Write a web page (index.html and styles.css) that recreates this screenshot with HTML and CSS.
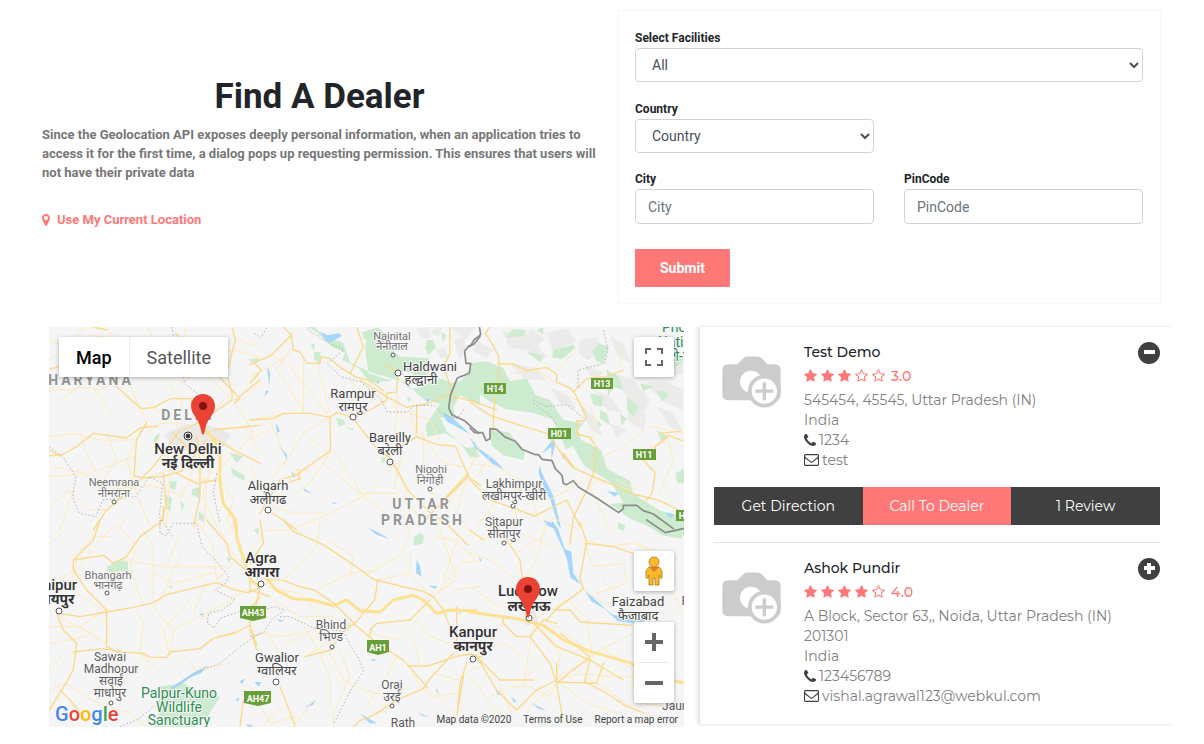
FILE: index.html
```html
<!DOCTYPE html>
<html lang="en">
<head>
<meta charset="utf-8">
<meta name="viewport" content="width=device-width, initial-scale=1">
<title>Find A Dealer</title>
<link rel="stylesheet" href="styles.css">
</head>
<body>
<svg class="sprite" aria-hidden="true">
  <symbol id="star" viewBox="0 0 1664 1792"><path d="M1664 647q0 22-26 48l-363 354 86 500q1 7 1 20 0 21-10.500 35.500t-30.500 14.500q-19 0-40-12l-449-236-449 236q-22 12-40 12-21 0-31.500-14.500t-10.500-35.500q0-6 2-20l86-500-364-354q-25-27-25-48 0-37 56-46l502-73 225-455q19-41 49-41t49 41l225 455 502 73q56 9 56 46z"/></symbol>
  <symbol id="star-o" viewBox="0 0 1664 1792"><path d="M1137 1004l306-297-422-62-189-382-189 382-422 62 306 297-73 421 378-199 377 199zm527-357q0 22-26 48l-363 354 86 500q1 7 1 20 0 50-41 50-19 0-40-12l-449-236-449 236q-22 12-40 12-21 0-31.500-14.500t-10.500-35.500q0-6 2-20l86-500-364-354q-25-27-25-48 0-37 56-46l502-73 225-455q19-41 49-41t49 41l225 455 502 73q56 9 56 46z"/></symbol>
  <symbol id="phone" viewBox="192 128 1408 1408"><path d="M1600 1240q0 27-10 70.500t-21 68.500q-21 50-122 106-94 51-186 51-27 0-53-3.500t-57.500-12.500-47-14.500-55.500-20.500-49-18q-98-35-175-83-127-79-264-216t-216-264q-48-77-83-175-3-9-18-49t-20.500-55.500-14.500-47-12.500-57.500-3.500-53q0-92 51-186 56-101 106-122 25-11 68.500-21t70.500-10q14 0 21 3 18 6 53 76 11 19 30 54t35 63.500 31 53.500q3 4 17.500 25t21.500 35.500 7 28.500q0 20-28.500 50t-62 55-62 53-28.500 46q0 9 5 22.500t8.500 20.500 14 24 11.500 19q76 137 174 235t235 174q2 1 19 11.500t24 14 20.500 8.500 22.500 5q18 0 46-28.500t53-62 55-62 50-28.500q14 0 28.500 7t35.500 21.500 25 17.500q25 15 53.500 31t63.500 35 54 30q70 35 76 53 3 7 3 21z"/></symbol>
  <symbol id="mail" viewBox="0 256 1792 1408"><path d="M1664 1504v-768q-32 36-69 66-268 206-426 338-51 43-83 67t-86.500 48.500-102.500 24.500h-2q-48 0-102.500-24.500t-86.500-48.500-83-67q-158-132-426-338-37-30-69-66v768q0 13 9.500 22.500t22.500 9.500h1472q13 0 22.500-9.500t9.500-22.500zm0-1051v-24.500l-.5-13-3-12.500-5.500-9-9-7.500-14-2.500h-1472q-13 0-22.500 9.500t-9.500 22.500q0 168 147 284 193 152 401 317 6 5 35 29.500t46 37.500 44.500 31.500 50.500 27.500 43 9h2q20 0 43-9t50.500-27.500 44.500-31.500 46-37.500 35-29.500q208-165 401-317 54-43 100.500-115.500t46.500-131.500zm128-37v1088q0 66-47 113t-113 47h-1472q-66 0-113-47t-47-113v-1088q0-66 47-113t113-47h1472q66 0 113 47t47 113z"/></symbol>
  <symbol id="marker" viewBox="0 128 1024 1536"><path d="M768 640q0-106-75-181t-181-75-181 75-75 181 75 181 181 75 181-75 75-181zm256 0q0 109-33 179l-364 774q-16 33-47.500 52t-67.500 19-67.500-19-46.500-52l-365-774q-33-70-33-179 0-212 150-362t362-150 362 150 150 362z"/></symbol>
  <symbol id="camera" viewBox="96 108 177 155">
    <path fill="#ccc" d="M115 132h27l18-18q5-5 11-5h32q7 0 12 5l17 18h22q18 0 18 18v72q0 18-18 18H115q-18 0-18-18v-72q0-18 18-18z"/>
    <circle cx="183" cy="185" r="33" fill="#fff"/>
    <circle cx="223" cy="213" r="49" fill="#ccc"/>
    <circle cx="223" cy="213" r="38" fill="#fff"/>
    <path stroke="#ccc" stroke-width="10" d="M223 186v54M196 213h54"/>
  </symbol>
  <symbol id="pin" viewBox="0 0 26 42">
    <path fill="#ea4335" d="M13 1C6 1 1 6 1 13c0 8 7 12 9 20l2 8q1 1 2 0l2-8c2-8 9-12 9-20C25 6 20 1 13 1z"/>
    <circle cx="13" cy="13" r="4" fill="#811411"/>
  </symbol>
</svg>

<main class="page">
  <section class="top">
    <div class="intro">
      <h1>Find A Dealer</h1>
      <p>Since the Geolocation API exposes deeply personal information, when an application tries to access it for the first time, a dialog pops up requesting permission. This ensures that users will not have their private data</p>
      <a class="locate" href="#"><svg aria-hidden="true"><use href="#marker"/></svg>Use My Current Location</a>
    </div>
    <form class="search">
      <div class="field wide">
        <label for="facilities">Select Facilities</label>
        <select id="facilities"><option>All</option></select>
      </div>
      <div class="field first">
        <label for="country">Country</label>
        <select id="country"><option>Country</option></select>
      </div>
      <div class="field first">
        <label for="city">City</label>
        <input id="city" type="text" placeholder="City">
      </div>
      <div class="field">
        <label for="pincode">PinCode</label>
        <input id="pincode" type="text" placeholder="PinCode">
      </div>
      <button class="submit" type="button">Submit</button>
    </form>
  </section>

  <section class="results">
    <div class="map">
      <svg class="map-art" viewBox="49 327 635 400" preserveAspectRatio="xMidYMid slice" role="img" aria-label="Map of dealers in Uttar Pradesh">
        <rect x="49" y="327" width="635" height="400" fill="#f5f5f5"/>
        <!-- hills -->
        <g class="hill">
          <path transform="translate(250 320) scale(.3333)" d="M560 20h20l-14 30-24-12zM612 60l30-10 6 40-20 26zM600 20l80 0-34 40zM500 26l34-6 8 30-26 6zM560 90l26-8 8 26-24 8z"/>
          <path transform="translate(470 320) scale(.3333)" d="M96 30l60 20 30-22 40 30-50 34-60-10zM230 40l60-16 30 40-44 20-20 30zM330 60l50-10 16 40-40 30-32-20zM420 50l40 20 24 60-40-20zM120 130l80 14 30 40-70-10zM20 60l50 30-20 24-40-20zM370 210l50 20 40 50-50-10zM430 160l60 20 50 60-20 40-50-50zM520 190l60-10 60 30v60l-50-20zM480 240l50 50-10 40-50-30zM560 260l50 20 30 60-40-20zM340 130l60 30-30 24zM240 200l60 30 20 40-50-20zM330 250l40 40 30 60-40-20zM200 70l30 40-20 20-36-30zM580 130l60 0v30l-50 10zM420 310l50 20-30 24z"/>
        </g>
        <!-- woodland -->
        <g class="wood">
          <path transform="translate(250 320) scale(.3333)" d="M172 22l24 12 50 46 40 18-10 22 50 24 34 44 60-6 20-12 40 36 40-4 26-22 30-4 30 14 28-8 20-30 36-10v114l-60-30-20 36 8 60 60 46 10 44-28 0-30-46-46-26-52 10-6-32 44-66-54-18-52-48-98-28-66-30-20-60-60-20-60-60 10 0zM338 36l46-14 30 30-10 24 46 34 86 4 10 30-20 30-70-8-40 14-60-20zM192 96l20 0-2 36-18-14zM470 232l14 0-6 16zM530 60l20 0 8 24-24 20-8-20zM574 36l16 10-12 20zM258 294l20 4 10 14-20 8zM286 320l24 6-2 8zM392 410l16 4-10 18zM180 76l16-6-4 20z"/>
          <path fill="#f5f5f5" transform="translate(250 320) scale(.3333)" d="M330 52l20 8-8 30-14-12zM446 150l40 10 20 30-30-8zM570 290l50 20 60 70-30 4-60-50z"/>
          <path transform="translate(470 320) scale(.3333)" d="M0 130l50-6 50 20 20 40 50-10 26 50 44 16 40 60 60 10-16 20 10 30 60 30 16 56 70 36 10 40 80 50 120 30v44h-90l-120-50-60-44 40-4-36-60-80-50-36-60-20 10-40-90-60-20-80-10-60-30-48-46zM60 330l56 6 50 60-6 24-60-14-36-30zM130 26l40 6-10 16-50 4zM250 90l60-16 6 10-40 34-30-6zM366 96l20-26 30 10-16 50-20-6zM410 150l36 20 14 40-30-10-16 30zM360 220l40 10-4 30-26-6zM390 270l20 10 10 36-30-20zM470 230l36 30-14 30-20-20zM510 190l40 10-30 14zM560 210l36 10-20 26zM380 300l16 14-10 10zM560 330l36 20-22 16zM600 130l40-24v20l-30 20zM450 280l20 16-14 20zM170 96l50 10-10 20zM616 460l26-14v44l-20 0zM200 30l20-8 0 22z"/>
          <path transform="translate(40 320) scale(.3333)" d="M570 398l40 10-20 22zM572 442l44 26-4 14-34-18zM390 484l22 0-8 26-14-6zM456 508l26-8-4 34-24-10zM380 524l16 10-6 40-16-10zM420 540l14 14-8 20zM476 572l16 16 0 20-16-12zM346 348l14-8-6 22-16 6zM628 118l30-4v10l-26 2z"/>
          <path transform="translate(40 520) scale(.3333)" d="M200 140l40-20 24 6 0 26-56 6zM350 500l80-10 40 20 70 22-40 60-50 40-110 0 20-60zM386 196l12 0-6 12zM560 112l14 4-6 14zM642 30l14-6v20z"/>
          <path transform="translate(250 520) scale(.3333)" d="M492 50l20-12 10 10-4 22-28 8zM12 26l14 0-4 18zM620 270l20 4-10 10zM290 312l12 4-8 6z"/>
          <path transform="translate(470 520) scale(.3333)" d="M442 8l24 6-6 20-14-8zM530 0l56 34 50-14v36l-60-10-60-40zM206 612h60l-10 20h-50z"/>
        </g>
        <!-- water -->
        <g class="water">
          <path transform="translate(250 320) scale(.3333)" d="M210 34l22 12 36-6 8 8-32 18-18-4zM580 276l30 20 40 36 8 10-70-40zM54 140l6 20-2 40-6-50zM48 210l-4 20 12-16zM76 306l14 26-8 8zM88 378l24 26-2 16zM122 454l14 10-4 10zM160 504l28 18-24-8zM244 546l20 4-12 2zM380 184l10 4-8 4zM524 234l18 4-10 10zM280 120l8 10z"/>
          <path transform="translate(470 320) scale(.3333)" d="M0 354l22 28 50 36 30 30-34-16-54-50zM250 356l-36 46 30-22 0 40 12-50zM208 438l12 30 30 60 24 100-10-14-22-72-30-64-6-20zM220 600l30 10 10 20-30-14zM410 514l36 4-10 12zM586 578l26 4-10 14zM276 404l14 4-10 10z"/>
          <path transform="translate(470 520) scale(.3333)" d="M244 0l20 26 20 60 20 10 6 64 34 50 40 36 40 36 50 16 60-2-30 16-60-8-40-38-40-22-30-50-32-20-12-60-12-30-26-56zM74 502l20 20-10 4zM122 530l16 12-4 8zM184 548l46 24-24-6zM220 576l16 20-8 2zM24 110l12 10-4 6zM16 400l26 40-20-20z"/>
          <path transform="translate(250 520) scale(.3333)" d="M352 22l30 14 38 22-40-14zM500 116l10 24 4 30-16-12zM536 196l28 4-10 6zM15 486l22 0-16 10zM360 418l22 0-12 6zM164 562l34-22-10 16zM500 576l40 16-20-4zM560 504l8 20-10-10zM330 580l50 30-20 0zM80 298l24 4-14 4z"/>
          <path transform="translate(40 520) scale(.3333)" d="M478 282l14-4-4 14zM390 505l30-20 24-16 40-24 20-10-20 24-34 14-24 18-26 16zM645 488l15 0v12zM600 484l16-10-10 18zM586 540l12-10-4 14zM616 612l24 4-10 6zM405 338l10-8z"/>
          <path transform="translate(40 320) scale(.3333)" d="M400 340l16-14 4 4-12 10z"/>
        </g>
        <path class="city" d="M165 434l22-10 30 3 14 8-10 16-36 0-14-6zM521 612l14-2 3 12-12 4z"/>

        <!-- minor roads -->
        <g class="minor">
          <path transform="translate(40 320) scale(.3333)" d="M28 60L80 84 150 46 240 56M28 120l60-36 40-60M90 84l40 80 90 120M28 210l80 0 60-90 100-60M130 164l190-20 100-40 90 0M60 240l60-40 60 10 80-50M270 190l30 80 20 40M320 20l30 60-20 60 60 50 30 50M420 190l70-40 80 86M440 60l60 60 80-30 80 20M28 350l70-10 80 20 110 0M28 470l120-10 80-30 60-20M120 340l20 60 60 120 80 30M190 480l40-60-30-80M290 360l-30 60 30 100 40 100M40 440l90 20 60 50 140-14 100 30M330 470l60-20 60 30 90 0M320 340l40-30 60 0 60 40 40-4 60 40M350 360l40 60 80 10 60-60M450 350l-60 100-10 170M440 340l60 160-10 130M500 360l-80 180M530 370l-40 160 40 90M60 630l40-120M28 560l60-50 60 60 60 0M580 240l60 100-50 60M600 250l60-60M620 330l40 70M590 60l70 20M580 400l-50 60 50 80-20 60 20 30M360 160l60-60 20-80M410 320l20-90M490 320l60-80M310 240l80 60M200 20l60 90-60 60-100-10"/>
          <path transform="translate(250 320) scale(.3333)" d="M0 170l60-30 60-40M120 90l-40 60 80 120M60 100l60 40 120 150M160 126l0 150M200 120l40 160M0 300l120-20 40 0M60 300l50 120-50 60M0 360l60-30M100 440l60-100 80-50M180 350l60 50M250 390l60 90 30 50-120 60-80 30M340 530l100-100M340 530l110 80M220 430l120 100M340 520l100 0 60 60M440 180l0 110-20 130M430 260l90 80 0 130M460 380l-30 130M520 350l60 80 60 10M540 510l50 50 60-100M480 280l60 20 30 60M300 180l50 50 60 20M440 440l40 100 0 90M0 440l60 120M60 570l80-120 40 0M60 560l80 20 80 0M240 400l-60 90-40 30M650 470l-30 110 40 50M690 380l-40 90M500 350l-20-80"/>
          <path transform="translate(470 320) scale(.3333)" d="M0 430l80 10 90 50 40 120M20 620l90-120 130 40M240 540l100-60M330 540l50-60 100 30M360 500l60 130M240 590l90 40M60 410l-40 60M120 160l80-10 60 40M300 230l60 30 20 50-20 60M320 90l-60 60M460 80l-10 60M400 410l60-30 80-60 100 20M510 400l80-40M590 340l20 80-40 100M130 560l20 60M500 510l-60-30"/>
          <path transform="translate(40 520) scale(.3333)" d="M28 190l80-40 90-110 60-40M28 70l50-40M100 110l60-60 60 0M110 120l-20 90 100 60M100 150l80 60 60-60M28 320l90 0 80-50M60 290l140 80M120 320l60 40M200 290l-60 60-110 20M290 270l20 40-10 90 60 60M300 20l40 60 0 160M240 20l50 60-20 60 40 120M340 160l60 30 120-30M250 120l120 20 200 0M380 140l40-100M330 250l70 80-10 80M400 330l120-60 100-60M390 410l-20-80 80-90M430 410l40 40 100-20M470 0l50 80 10 100M360 240l60-130M190 400l20 90M200 560l60-90 50-70M210 560l60 20 60 50M28 510l50-20 60 40 60 30M60 510l-30 60M480 270l60 80 60-10M500 180l-40 100M590 120l-60 60M540 30l50 90M28 450l50-60"/>
          <path transform="translate(250 520) scale(.3333)" d="M0 90l50-60 60 0M100 180l100-100 10-80M200 210l100-50 80-10M300 170l10-60-80-50M350 165l100-60 30-60-20-60M380 180l100-20 0-60M480 160l60 70M480 300l90-90 60-80 60-10M560 220l60-40-60-180M560 50l50 10 80 70M620 60l-40 120M690 200l-80 10M0 330l90 20 60-10M100 380l80-50 120-20M60 350l40 80M150 300l60 100 30 80 0 80M240 400l40 80 60 30 80 20 60-30M270 390l30 80-50 110 0 50M180 400l70-40 60-50M440 410l-30 60-60 90M480 440l30 60 40 30 70-10M490 360l20 80M500 300l40 50 60 20M360 340l80 20 60-60M0 500l60 110 80-20M90 560l-50 60M590 600l60-40M550 460l70 20 60-40M70 240l80 50 100 0M50 200l100 20 60 60M130 620l60-80M530 500l60 60 80 60"/>
          <path transform="translate(470 520) scale(.3333)" d="M0 100l60 20 80 60M30 60l100-30 120 50M140 100l90-60M230 0l-30 120-40 60M0 200l90 60M100 300l-30 60-50-20M190 320l-30 180M190 300l100-60 70 60M220 330l50 80-10 60 100-50M260 320l80 60 20 40M340 60l30 80 90-10 10 60-90 30M350 60l60 20 80-10 60 20M340 210l60 40 100-10M400 180l60 80 70 90M350 300l20 120M350 410l120-60 70-40M390 380l100 70 0 50M260 480l80-20 80 10 70 0M340 470l60 30 80 60M260 490l-80 70M180 500l60 30 20-40M270 490l80 60 100 30 0 30M20 400l80-30 60 40M60 530l60-30 60 0M170 470l60-60M90 500l40 90M180 560l-30 70M0 470l60 80 60 60M600 200l40 80M520 160l100 30M500 60l60 60M460 600l60-50 120 20"/>
        </g>

        <!-- main roads -->
        <g class="major">
          <path transform="translate(40 320) scale(.3333)" d="M28 148l50-14 80 0 46 30 16 26 60 56 26 20 36-4 50-26 60 0 10 30 20 60M28 390l32 18 50-28 50-40 100 14 40-30 54-6M28 408l32-4M320 308l-30 50-8 110 26 6 60-4 60-18 70-90M370 460l8 100-20 60M420 330l-80 110-80 80-60 50-40 60M430 330l60-30 86-60 0-30-50-50-60-60-60-60M576 210l24 26-16 14M586 240l74-60M576 220l-16-60 26-100-10-40M520 330l140-14M500 340l80 50 80 40M470 350l10 80 0 100-20 90M410 460l60 30 60-10M400 340l60 60M200 30l-60-14"/>
          <path transform="translate(250 320) scale(.3333)" d="M100 20l24 26-60 60-64 28M0 190l34-40-20-20M124 40l6 50 20 6 20 34 40 0 4-20 26 6 30 26 50 30 40 10 40 30M320 20l20 60-40 80M0 300l70-4 30-16 80 0 60 12 2 100-100 70 10 14-30 10M240 292l20-14 50 14 40-16 60-36 0-20 30-4 2-60-34-20M330 180l80 50 30 16 30 16 60-10 60-26 80 18 70 26M310 296l70 90 42 30 16 30 40 70 60 60 56 40 60 60M420 400l80-50 60 24 56 4 20 46 20 44-90 90-60 60M500 260l0 80M570 550l80-84 40 30M600 20l0 80-20 40 30 80M150 460l-60 20-60 100M50 570l50 30 40 30"/>
          <path transform="translate(470 320) scale(.3333)" d="M60 20l-14 20 20 30 20 40 0 60-16 110 0 60M86 132l44 0 40 20 60-10 30 20 0 24 44 20 10 14 20 40 16 34-10 10-20-2 0 40 40 10 20 30-10 80-20 50-40 80-10 80M310 216l40-40 60-6 50-20M0 246l60 40 90 30 80 24 60 80 20 24 60 26 40 16 80 36 80 20 60 30 70 10M520 420l36 40-10 60-20 24M556 420l0-40 40-34 40 16M570 340l60-6M280 400l30 40M190 590l100-50 40 80M0 480l60 60 130 46"/>
          <path transform="translate(40 520) scale(.3333)" d="M180 0l-20 60-60 60 90-14 30 24 40-20 40-60 70-50 0-40M100 120l0 30 40 60 60 60 0 110 40 20M60 280l60 10 80-14 80-14 60-14 40-24 150-36 50 20 40 10 40-14M500 0l60 70 10 40 60 50 0 60M100 396l90-10 60 10 60 4 20 12 50 0 10-16 90-10 40-30 70-20 40-20 20 60M50 280l20 50 40 40-10 80-40 70-40 60M60 510l30 30 50 60M600 620l10-80M630 320l6-60 24-30"/>
          <path transform="translate(250 520) scale(.3333)" d="M100 0l30 34 90 40 90 60 60 44 80 20 70 16 30 16 30 40 20 50M384 180l-10 60-60 70-40 30-30 50-80 20M312 310l-60-60-60-40-50-12-40-16-60-4M0 330l20 60M312 312l60 50 60 40 30 20 70 80M360 330l20-20 100-10 60-60M356 350l10-20M474 438l60 0 90-30 40-6 30 10M610 400l-70 76-20 30-70 30-80 50-40 16-30 30M0 210l60 20M90 500l20 50 30 80M640 470l-20 120M620 260l0 110M0 130l40-60-10-70M30 200l-20 90M650 430l-20 60-10 120"/>
          <path transform="translate(470 520) scale(.3333)" d="M60 10l50 50 40 60 10 80 10 90M30 420l60 60 100 0M100 290l0 20 40 40 40 0 40-50 40 10M180 350l60 80 20 60 20 120M230 300l30-34 80-60-10-30 20-110-20-60M250 270l50 0 30 36 160 10M350 70l80 10 60 20M180 300l80 80 100 40 100 60M270 340l90 70-100 80 0-60M360 416l-16 70 60 30 60 40 100 40M400 430l-20 60-120-4M260 480l-60 30-60 60-60-60-60-100M490 310l60 30 60 60M0 30l40 30"/>
        </g>
        <!-- motorways -->
        <g class="motor">
          <path transform="translate(40 320) scale(.3333)" d="M500 330l40 60 0 100 10 60 30 40 10 40"/>
          <path transform="translate(40 520) scale(.3333)" d="M586 0l6 60 20 60 20 60 28 20"/>
          <path transform="translate(250 520) scale(.3333)" d="M50 176l30 36 50 24 60 4 60 18 40-18 40 32 60 4 40-36 60-14 30 14 40 40 40-10 80 2"/>
          <path transform="translate(470 520) scale(.3333)" d="M0 276l100 14 40 6 80 20 60 44 80 34 120 34 60 40 100 20"/>
        </g>
        <!-- state borders -->
        <g class="border">
          <path transform="translate(40 320) scale(.3333)" d="M394 20l20 80 20 90 50 40M28 380l40 30 40 60-10 60 20 50 50 10 20-50 100-10 40-60 40 20-10 100 40 60M470 240l10 60M530 460l-10 60 20 90"/>
          <path transform="translate(250 320) scale(.3333)" d="M172 26l40 30 70 34-50 40 40 40 60 16 60 50 20 40 60 0 20-20 60 0 30 30 40 10 20-30M12 40l20 14 20-34"/>
          <path transform="translate(470 320) scale(.3333)" d="M400 30l14 60-10 40-80 20 0 50M190 240l40 20 60-6 50 40M190 250l50 34 20 30"/>
          <path transform="translate(40 520) scale(.3333)" d="M360 0l0 40 20 6 20-36 70 0 16 70 40 40 40 50-10 20-30 20 60 30-40 30-40 10-4 30 20 14 20-30 60-20M660 340l-60 40-60 50-80 30-80 60-50 50-40 30-50 20"/>
          <path transform="translate(250 520) scale(.3333)" d="M0 350l40-10 24-40 40-30-30-10-30 10M90 290l30 0 70 34 90 10 20 40 30 50 10 30-40 60-30 60-20 40"/>
        </g>
        <g class="nation">
          <path transform="translate(250 320) scale(.3333)" d="M690 50l-20 24-14 4-12 16 4 36 14 0-4 30-36 14-20 50-6 40 10 20 40 20 40 36"/>
          <path transform="translate(470 320) scale(.3333)" d="M28 20l4 24-20 16-12 20M0 324l14 14 24 0 10 24 12-6 0-30 20 2 26 24 30 12 20 24 40 16 10 0 10 14 30 4 10 24 20 20 4 24 10 4 20-12 16 20 60 36 60 40 14-12 0-10 40 0 20 16 30 10 60 44"/>
          <path transform="translate(470 520) scale(.3333)" d="M530 0l56 38 54-12"/>
        </g>

        <!-- road shields -->
        <g class="shield">
          <rect x="484" y="383" width="22" height="11"/><text x="495" y="392">H14</text>
          <rect x="591" y="378" width="22" height="11"/><text x="602" y="387">H13</text>
          <rect x="548" y="428" width="23" height="11"/><text x="559" y="437">H01</text>
          <rect x="633" y="449" width="23" height="11"/><text x="644" y="458">H11</text>
          <rect x="676" y="510" width="22" height="11"/><text x="687" y="519">H18</text>
          <path d="M240 606h26v12l-13 3-13-3z"/><text x="253" y="616">AH43</text>
          <path d="M367 640h22v12l-11 3-11-3z"/><text x="378" y="651">AH1</text>
          <path d="M244 691h27v12l-13 3-14-3z"/><text x="258" y="702">AH47</text>
        </g>

        <!-- towns -->
        <g class="dot">
          <circle cx="393" cy="355" r="2"/><circle cx="398" cy="373" r="3"/><circle cx="353" cy="417" r="3"/><circle cx="390" cy="462" r="3"/><circle cx="430" cy="489" r="2"/><circle cx="268" cy="510" r="3"/><circle cx="114" cy="502" r="2"/><circle cx="513" cy="506" r="2"/><circle cx="504" cy="543" r="2"/><circle cx="529" cy="618" r="3"/><circle cx="473" cy="659" r="3"/><circle cx="261" cy="584" r="3"/><circle cx="107" cy="593" r="2"/><circle cx="59" cy="611" r="3"/><circle cx="332" cy="647" r="2"/><circle cx="276" cy="682" r="3"/><circle cx="111" cy="703" r="2"/><circle cx="392" cy="706" r="2"/>
          <circle class="capital" cx="188" cy="436" r="4"/><circle class="core" cx="188" cy="436" r="2"/>
        </g>
        <g class="region">
          <text x="91" y="385">HARYANA</text>
          <text x="188" y="420">DELHI</text>
          <text x="422" y="509">UTTAR</text>
          <text x="423" y="525">PRADESH</text>
        </g>
        <g class="small">
          <text x="392" y="340">Nainital</text><text x="392" y="350">नैनीताल</text>
          <text x="431" y="473">Nigohi</text><text x="430" y="484">निगोही</text>
          <text x="114" y="486">Neemrana</text><text x="114" y="497">नीमराना</text>
          <text x="108" y="579">Bhangarh</text><text x="108" y="589">भानगढ़</text>
        </g>
        <g class="town">
          <text x="514" y="488">Lakhimpur</text><text x="514" y="500">लखीमपुर-खीरी</text>
          <text x="504" y="526">Sitapur</text><text x="504" y="538">सीतापुर</text>
          <text x="331" y="629">Bhind</text><text x="331" y="641">भिण्ड</text>
          <text x="110" y="661">Sawai</text><text x="111" y="673">Madhopur</text><text x="111" y="685">सवाई</text><text x="110" y="697">माधोपुर</text>
          <text x="392" y="689">Orai</text><text x="392" y="701">उरई</text>
          <text x="403" y="727">Rath</text>
          <text x="684" y="710">Jaunpur</text>
          <text x="695" y="605">Basti</text>
        </g>
        <g class="large">
          <text x="430" y="371">Haldwani</text><text x="421" y="384">हल्द्वानी</text>
          <text x="353" y="398">Rampur</text><text x="353" y="411">रामपुर</text>
          <text x="390" y="442">Bareilly</text><text x="390" y="455">बरेली</text>
          <text x="268" y="490">Aligarh</text><text x="268" y="504">अलीगढ</text>
          <text x="638" y="606">Faizabad</text><text x="638" y="620">फैजाबाद</text>
          <text x="277" y="662">Gwalior</text><text x="277" y="675">ग्वालियर</text>
        </g>
        <g class="metro">
          <text x="188" y="454">New Delhi</text><text class="hi" x="188" y="468">नई दिल्ली</text>
          <text x="261" y="563">Agra</text><text class="hi" x="262" y="577">आगरा</text>
          <text x="56" y="590">Jaipur</text><text class="hi" x="57" y="604">जयपुर</text>
          <text x="473" y="637">Kanpur</text><text class="hi" x="473" y="651">कानपुर</text>
          <text x="528" y="596">Lucknow</text><text class="hi" x="529" y="611">लखनऊ</text>
        </g>
        <g class="park">
          <text x="179" y="698">Palpur-Kuno</text><text x="179" y="712">Wildlife</text><text x="179" y="725">Sanctuary</text>
          <text x="697" y="332">Phoksundo</text><text x="684" y="347">National</text><text x="700" y="361">शे-फोक्सुन्डो</text>
        </g>
        <use href="#pin" x="190" y="393" width="26" height="42"/>
        <use href="#pin" x="515" y="576" width="26" height="42"/>
      </svg>

      <div class="map-type">
        <button type="button" class="on">Map</button>
        <button type="button">Satellite</button>
      </div>
      <button type="button" class="control full" aria-label="Toggle fullscreen">
        <svg width="18" height="18" viewBox="0 0 18 18" aria-hidden="true"><path fill="none" stroke="#666" stroke-width="2" d="M1 6V1h5M12 1h5v5M17 12v5h-5M6 17H1v-5"/></svg>
      </button>
      <div class="tools">
        <button type="button" class="control" aria-label="Street View">
          <svg width="18" height="30" viewBox="0 0 18 30" aria-hidden="true">
            <path fill="#fbb829" stroke="#b98a35" stroke-width="1" d="M4 11h10l3 4v7h-2l-1-3v10h-4v-7H8v7H4V19l-1 3H1v-7z"/>
            <path fill="#e07b26" d="M4 11h10l-5 5z"/>
            <circle cx="9" cy="6" r="5" fill="#fbb829" stroke="#b98a35"/>
          </svg>
        </button>
        <div class="zoom">
          <button type="button" aria-label="Zoom in"><svg width="18" height="18" viewBox="0 0 18 18" aria-hidden="true"><path stroke="#666" stroke-width="4" d="M0 9h18M9 0v18"/></svg></button>
          <button type="button" aria-label="Zoom out"><svg width="18" height="18" viewBox="0 0 18 18" aria-hidden="true"><path stroke="#666" stroke-width="4" d="M0 9h18"/></svg></button>
        </div>
      </div>
      <div class="logo" aria-label="Google"><span class="b">G</span><span class="r">o</span><span class="y">o</span><span class="b">g</span><span class="g">l</span><span class="r">e</span></div>
      <div class="credits"><span>Map data ©2020</span><a href="#">Terms of Use</a><a href="#">Report a map error</a></div>
    </div>

    <ul class="dealers">
      <li class="dealer">
        <div class="summary">
          <svg class="photo" aria-hidden="true"><use href="#camera"/></svg>
          <div class="details">
            <h2>Test Demo</h2>
            <div class="rating"><svg><use href="#star"/></svg><svg><use href="#star"/></svg><svg><use href="#star"/></svg><svg><use href="#star-o"/></svg><svg><use href="#star-o"/></svg><span>3.0</span></div>
            <p>545454, 45545, Uttar Pradesh (IN)</p>
            <p>India</p>
            <p class="contact"><svg class="tel" aria-hidden="true"><use href="#phone"/></svg>1234</p>
            <p class="contact"><svg class="mail" aria-hidden="true"><use href="#mail"/></svg>test</p>
          </div>
          <button type="button" class="toggle" aria-label="Collapse Test Demo"><svg viewBox="0 0 22 22" aria-hidden="true"><circle cx="11" cy="11" r="11" fill="#404040"/><path stroke="#fff" stroke-width="4" d="M6 10h11"/></svg></button>
        </div>
        <div class="actions">
          <a href="#">Get Direction</a>
          <a href="#" class="call">Call To Dealer</a>
          <a href="#">1 Review</a>
        </div>
      </li>
      <li class="dealer">
        <div class="summary">
          <svg class="photo" aria-hidden="true"><use href="#camera"/></svg>
          <div class="details">
            <h2>Ashok Pundir</h2>
            <div class="rating"><svg><use href="#star"/></svg><svg><use href="#star"/></svg><svg><use href="#star"/></svg><svg><use href="#star"/></svg><svg><use href="#star-o"/></svg><span>4.0</span></div>
            <p>A Block, Sector 63,, Noida, Uttar Pradesh (IN) 201301</p>
            <p>India</p>
            <p class="contact"><svg class="tel" aria-hidden="true"><use href="#phone"/></svg>123456789</p>
            <p class="contact"><svg class="mail" aria-hidden="true"><use href="#mail"/></svg>vishal.agrawal123@webkul.com</p>
          </div>
          <button type="button" class="toggle" aria-label="Expand Ashok Pundir"><svg viewBox="0 0 22 22" aria-hidden="true"><circle cx="11" cy="11" r="11" fill="#404040"/><path stroke="#fff" stroke-width="4" d="M6 10h11M11 5v11"/></svg></button>
        </div>
      </li>
    </ul>
  </section>
</main>
</body>
</html>
```

FILE: styles.css
```css
* { box-sizing: border-box; }
body { margin: 0; background: #fff; color: #212529; font-family: Roboto, sans-serif; font-size: 14px; }
button { font: inherit; border: 0; padding: 0; background: none; cursor: pointer; }
h1, h2, p, ul { margin: 0; padding: 0; }
a { text-decoration: none; }
.sprite { position: absolute; width: 0; height: 0; }

.page { padding: 10px 32px 16px 42px; }

.top { display: grid; grid-template-columns: 555fr 543fr; gap: 21px; padding-right: 11px; align-items: center; }
.intro { padding-bottom: 10px; }
.intro h1 { font-size: 35px; line-height: 44px; font-weight: 700; text-align: center; margin-bottom: 6px; }
.intro p { font-size: 13px; line-height: 19px; font-weight: 700; color: #777; }
.locate { display: inline-flex; align-items: center; gap: 7px; margin-top: 28px; font-size: 13px; line-height: 19px; font-weight: 700; color: #ff7878; }
.locate svg { width: 8px; height: 12px; fill: currentColor; }

.search { display: grid; grid-template-columns: 1fr 1fr; column-gap: 30px; border: 1px solid #f7f7f7; padding: 17px 17px 16px 16px; }
.field { display: flex; flex-direction: column; margin-bottom: 16px; }
.field.wide { grid-column: 1 / -1; margin-bottom: 17px; }
.field.first { grid-column: 1; }
.field label { font-size: 12px; line-height: 20px; font-weight: 700; color: #212529; }
.field select, .field input { width: 100%; height: 35px; padding: 0 12px; border: 1px solid #ced4da; border-radius: 4px; background: #fff; color: #495057; font-family: inherit; font-size: 14px; }
.field select { height: 34px; }
.field input::placeholder { color: #6c757d; }
.submit { justify-self: start; grid-column: 1; margin-top: 9px; padding: 0 25px; height: 38px; background: #ff7878; color: #fff; font-weight: 700; }

.results { display: grid; grid-template-columns: 635fr 472fr; gap: 16px; margin-top: 23px; padding-left: 7px; }

.map { position: relative; min-height: 400px; overflow: hidden; }
.map-art { position: absolute; inset: 0; width: 100%; height: 100%; display: block; }
.hill { fill: #ebebea; }
.wood { fill: #cdebce; }
.water { fill: #a5d6fb; }
.city { fill: #e9e9e9; }
.minor, .major, .motor, .border, .nation { fill: none; stroke-linejoin: round; stroke-linecap: round; }
.minor { stroke: #fdeabd; stroke-width: 3; }
.major { stroke: #fad98a; stroke-width: 4; }
.motor { stroke: #fde293; stroke-width: 9; }
.border { stroke: #b5b5b5; stroke-width: 3; stroke-dasharray: 5 6; stroke-linecap: butt; }
.nation { stroke: #8c8c8c; stroke-width: 5; }
.dot circle { fill: #fff; stroke: #555; stroke-width: 1px; }
.dot .capital { stroke: #333; }
.dot .core { fill: #333; stroke: #333; }
.map-art text { font-family: Roboto, "Noto Sans", "Noto Sans Devanagari", sans-serif; text-anchor: middle; paint-order: stroke; stroke: #f8f8f8; stroke-width: 2px; stroke-linejoin: round; }
.map-art .shield { fill: #689f38; }
.map-art .shield text { fill: #fff; stroke: none; font-size: 9px; font-weight: 700; }
.region text { fill: #949494; font-size: 14px; font-weight: 700; letter-spacing: 3px; }
.small text { fill: #707070; font-size: 11px; }
.town text { fill: #5c5c5c; font-size: 12px; }
.large text { fill: #444; font-size: 13px; }
.metro text { fill: #333; font-size: 15px; font-weight: 500; }
.metro .hi { font-size: 14px; font-weight: 700; }
.park text { fill: #2f8d52; font-size: 14px; }

.map-type { position: absolute; top: 10px; left: 10px; display: flex; background: #fff; box-shadow: 0 1px 4px rgba(0,0,0,.3); }
.map-type button { height: 40px; padding: 0 17px; font-size: 18px; color: #565656; }
.map-type .on { color: #000; font-weight: 500; }
.map-type button + button { border-left: 1px solid #eee; }
.control { display: grid; place-items: center; width: 40px; height: 40px; background: #fff; border-radius: 2px; box-shadow: 0 1px 4px rgba(0,0,0,.3); }
.full { position: absolute; top: 10px; right: 10px; }
.tools { position: absolute; right: 10px; bottom: 24px; display: flex; flex-direction: column; gap: 31px; }
.zoom { width: 40px; background: #fff; border-radius: 2px; box-shadow: 0 1px 4px rgba(0,0,0,.3); display: flex; flex-direction: column; align-items: center; }
.zoom button { width: 30px; height: 40px; display: grid; place-items: center; }
.zoom button + button { height: 41px; border-top: 1px solid #e6e6e6; }
.logo { position: absolute; left: 6px; bottom: 1px; font-size: 20px; line-height: 24px; font-weight: 500; text-shadow: 0 0 2px #fff, 0 0 2px #fff; }
.logo .b { color: #4285f4; }
.logo .r { color: #ea4335; }
.logo .y { color: #fbbc05; }
.logo .g { color: #34a853; }
.credits { position: absolute; right: 0; bottom: 0; display: flex; gap: 12px; padding: 0 6px; background: rgba(245,245,245,.7); font-size: 10px; line-height: 14px; }
.credits, .credits a { color: #444; }

.dealers { list-style: none; margin-bottom: 3px; padding: 0 12px 0 14px; box-shadow: -3px 0 3px rgba(0,0,0,.1), 0 -1px 2px rgba(0,0,0,.04), 0 1px 2px rgba(0,0,0,.05); font-family: Montserrat, Inter, sans-serif; font-size: 14px; line-height: 20px; clip-path: inset(-4px 0 -4px -8px); }
.dealer { padding: 15px 0 17px; }
.dealer + .dealer { border-top: 1px solid #e2e2e2; }
.summary { display: flex; align-items: flex-start; }
.photo { flex: none; width: 59px; height: 52px; margin: 14px 23px 0 8px; }
.details { flex: 1; min-width: 0; color: #808080; }
.details h2 { font-size: 14px; line-height: 20px; font-weight: 500; color: #212529; }
.rating { display: flex; align-items: center; gap: 4px; height: 28px; color: #ff7878; font-weight: 500; }
.rating svg { width: 13px; height: 14px; fill: currentColor; }
.rating span { margin-left: 2px; }
.contact { display: flex; align-items: center; gap: 3px; }
.contact svg { fill: #404040; flex: none; }
.tel { width: 12px; height: 12px; }
.mail { width: 15px; height: 12px; }
.toggle { flex: none; width: 22px; height: 22px; }
.toggle svg { display: block; width: 22px; height: 22px; }
.actions { display: grid; grid-template-columns: 1fr 1fr 1fr; margin-top: 17px; }
.actions a { background: #404040; color: #fff; line-height: 38px; text-align: center; }
.actions .call { background: #ff7878; }
```
